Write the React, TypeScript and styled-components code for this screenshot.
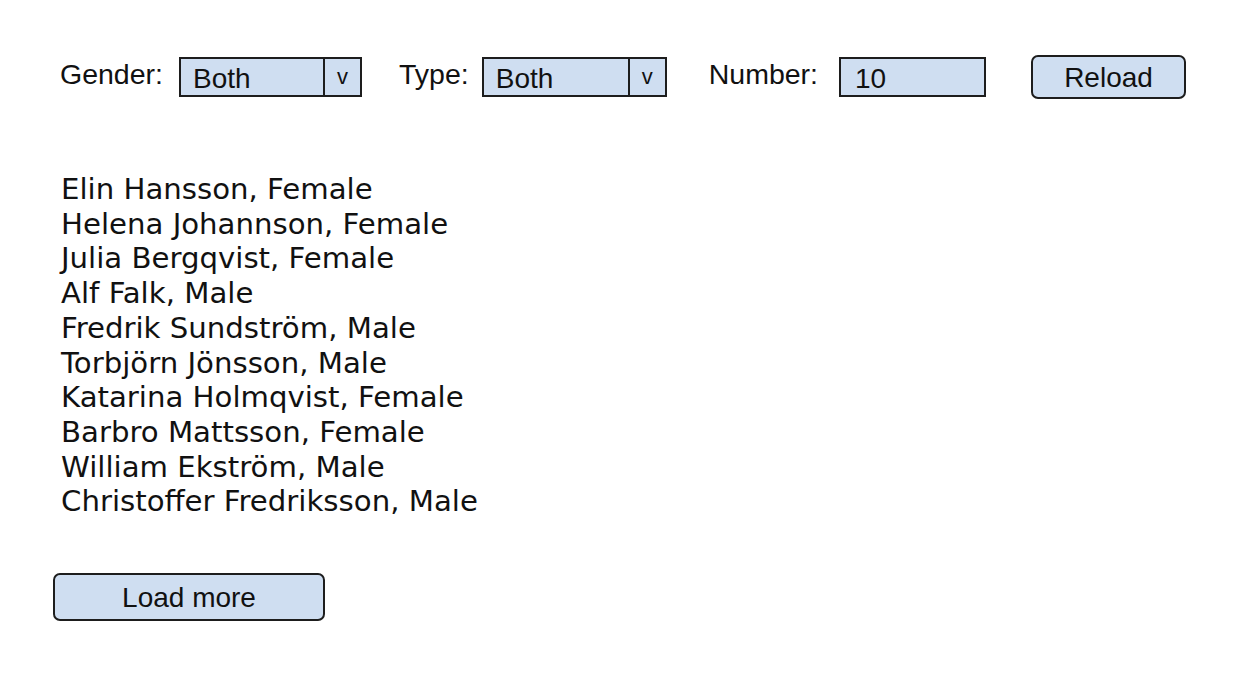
import React, { useState } from "react";
import styled, { createGlobalStyle } from "styled-components";

const GlobalStyle = createGlobalStyle`
  html, body {
    margin: 0;
    padding: 0;
    background: #ffffff;
  }
`;

const Page = styled.div`
  width: 1236px;
  height: 676px;
  box-sizing: border-box;
  padding: 55px 0 0 60px;
  font-family: "Liberation Sans", Arial, sans-serif;
  color: #111;
`;

const Toolbar = styled.div`
  display: flex;
  align-items: center;
  height: 44px;
`;

const Field = styled.div<{ gap: number; space: number }>`
  display: flex;
  align-items: center;
  gap: ${(p) => p.gap}px;
  margin-right: ${(p) => p.space}px;
`;

const Label = styled.span`
  font-size: 28.5px;
  line-height: 1;
  padding-bottom: 6px;
`;

const Select = styled.div<{ width: number }>`
  display: flex;
  width: ${(p) => p.width}px;
  height: 40px;
  box-sizing: border-box;
  border: 2px solid #1d1d1d;
  background: #cfdef1;
`;

const SelectValue = styled.div`
  flex: 1;
  display: flex;
  align-items: center;
  padding: 3px 0 0 12px;
  font-size: 28px;
`;

const Arrow = styled.div`
  width: 37px;
  border-left: 2px solid #1d1d1d;
  display: flex;
  align-items: center;
  justify-content: center;
  font-size: 22px;
  padding-bottom: 1px;
  box-sizing: border-box;
`;

const Input = styled.div`
  width: 147px;
  height: 40px;
  box-sizing: border-box;
  border: 2px solid #1d1d1d;
  background: #cfdef1;
  display: flex;
  align-items: center;
  padding: 3px 0 0 14px;
  font-size: 28px;
`;

const Button = styled.button<{ width: number; height: number }>`
  width: ${(p) => p.width}px;
  height: ${(p) => p.height}px;
  border: 2px solid #1d1d1d;
  border-radius: 7px;
  background: #cfdef1;
  font-family: "Liberation Sans", Arial, sans-serif;
  font-size: 28px;
  color: #111;
  padding: 2px 0 0;
  cursor: pointer;
`;

const List = styled.ul`
  list-style: none;
  margin: 73px 0 0 1px;
  padding: 0;
  font-family: "DejaVu Sans", Verdana, sans-serif;
  font-size: 29.2px;
  line-height: 34.7px;
`;

const Person = styled.li``;

const Footer = styled.div`
  margin-top: 54px;
  margin-left: -7px;
`;

interface IPerson {
  name: string;
  gender: "Female" | "Male";
}

const people: IPerson[] = [
  { name: "Elin Hansson", gender: "Female" },
  { name: "Helena Johannson", gender: "Female" },
  { name: "Julia Bergqvist", gender: "Female" },
  { name: "Alf Falk", gender: "Male" },
  { name: "Fredrik Sundström", gender: "Male" },
  { name: "Torbjörn Jönsson", gender: "Male" },
  { name: "Katarina Holmqvist", gender: "Female" },
  { name: "Barbro Mattsson", gender: "Female" },
  { name: "William Ekström", gender: "Male" },
  { name: "Christoffer Fredriksson", gender: "Male" },
];

const App = () => {
  const [count] = useState(10);

  return (
    <Page>
      <GlobalStyle />
      <Toolbar>
        <Field gap={16} space={37}>
          <Label>Gender:</Label>
          <Select width={183}>
            <SelectValue>Both</SelectValue>
            <Arrow>v</Arrow>
          </Select>
        </Field>
        <Field gap={13} space={42}>
          <Label>Type:</Label>
          <Select width={185}>
            <SelectValue>Both</SelectValue>
            <Arrow>v</Arrow>
          </Select>
        </Field>
        <Field gap={21} space={45}>
          <Label>Number:</Label>
          <Input>{count}</Input>
        </Field>
        <Button width={155} height={44}>
          Reload
        </Button>
      </Toolbar>
      <List>
        {people.map((p) => (
          <Person key={p.name}>
            {p.name}, {p.gender}
          </Person>
        ))}
      </List>
      <Footer>
        <Button width={272} height={48}>
          Load more
        </Button>
      </Footer>
    </Page>
  );
};

export default App;
